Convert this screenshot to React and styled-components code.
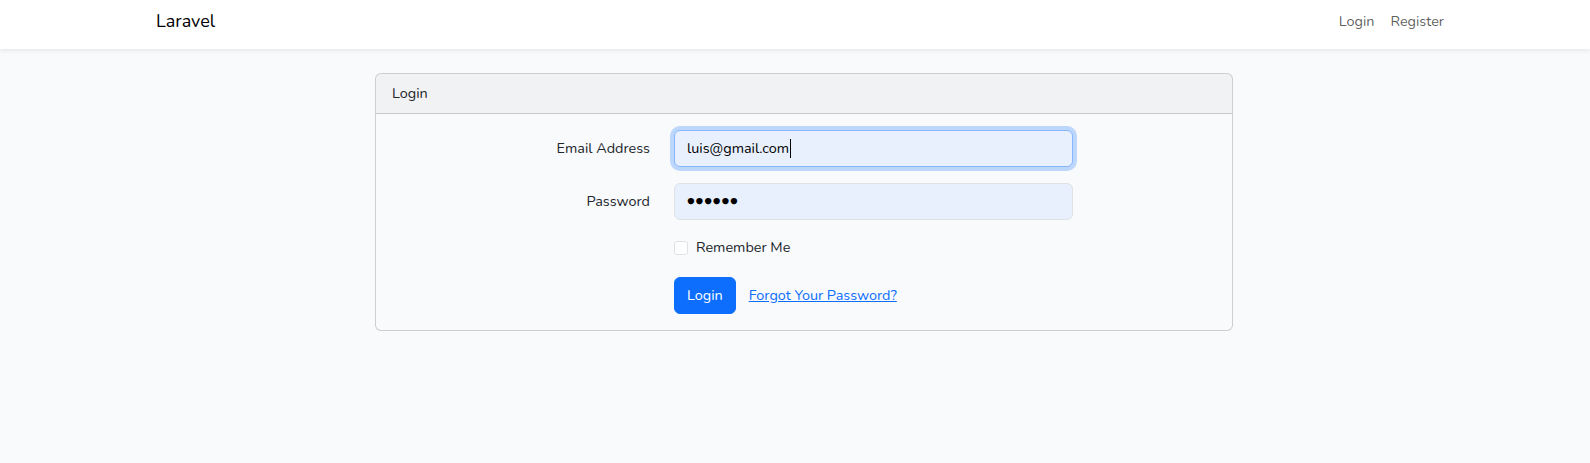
import React from 'react';
import styled, { createGlobalStyle } from 'styled-components';

const GlobalStyle = createGlobalStyle`
	body {
		margin: 0;
		background: #f8fafc;
		color: #212529;
		font-family: "Nunito", "Lato", "Noto Sans", sans-serif;
		font-size: 14.4px;
		line-height: 1.6;
	}
`;

const Navbar = styled.nav`
	background: #fff;
	box-shadow: 0 2px 4px rgba(0, 0, 0, 0.075);
	height: 49px;
`;

const Container = styled.div`
	box-sizing: border-box;
	display: flex;
	align-items: center;
	justify-content: ${props => (props.center ? 'center' : 'space-between')};
	height: 100%;
	margin: 0 auto;
	max-width: 1314px;
	padding-left: 18px;
`;

const Brand = styled.a`
	color: #000;
	font-size: 18px;
	line-height: 28px;
	margin-top: -7px;
	text-decoration: none;
`;

const NavLinks = styled.ul`
	display: flex;
	list-style: none;
	margin: -6px 0 0;
	padding: 0;
`;

const NavLink = styled.a`
	color: rgba(0, 0, 0, 0.65);
	display: block;
	padding: 0 8px;
	text-decoration: none;
`;

const Main = styled.main`
	padding: 24px 0;
`;

const Card = styled.div`
	background: #f8fafc;
	border: 1px solid rgba(0, 0, 0, 0.175);
	border-radius: 6px;
	overflow: hidden;
	width: 856px;
`;

const CardHeader = styled.div`
	background: rgba(0, 0, 0, 0.03);
	border-bottom: 1px solid rgba(0, 0, 0, 0.175);
	padding: 8px 16px;
`;

const CardBody = styled.form`
	display: flex;
	flex-direction: column;
	gap: 16px;
	padding: 16px;
`;

const FormRow = styled.div`
	display: grid;
	grid-template-columns: 258px 399px;
	column-gap: 24px;
	align-items: center;
`;

const Label = styled.label`
	grid-column: 1;
	text-align: right;
`;

const Field = styled.div`
	grid-column: 2;
	background: #e8f0fe;
	border: 1px solid ${props => (props.focused ? '#86b7fe' : '#dee2e6')};
	border-radius: 6px;
	box-shadow: ${props => (props.focused ? '0 0 0 4px rgba(13, 110, 253, 0.25)' : 'none')};
	box-sizing: border-box;
	color: #000;
	display: flex;
	align-items: center;
	height: 37px;
	padding: 0 12px;
`;

const Caret = styled.span`
	background: #000;
	display: inline-block;
	height: 19px;
	margin-left: 1px;
	width: 1px;
`;

const Dots = styled.span`
	font-size: 13px;
	letter-spacing: 0.8px;
`;

const Offset = styled.div`
	grid-column: 2;
	display: flex;
	align-items: center;
	margin-bottom: ${props => props.mb || 0}px;
`;

const Check = styled.span`
	background: #fff;
	border: 1px solid #dee2e6;
	border-radius: 3px;
	box-sizing: border-box;
	height: 14px;
	margin-right: 8px;
	width: 14px;
`;

const Button = styled.button`
	background: #0d6efd;
	border: 1px solid #0d6efd;
	border-radius: 6px;
	color: #fff;
	font: inherit;
	height: 37px;
	padding: 0 12px;
`;

const LinkButton = styled.a`
	color: #0d6efd;
	margin-left: 1px;
	padding: 6px 12px;
	text-decoration: underline;
`;

export default function App() {
	return (
		<>
			<GlobalStyle />
			<Navbar>
				<Container>
					<Brand href="#">Laravel</Brand>
					<NavLinks>
						<li><NavLink href="#">Login</NavLink></li>
						<li><NavLink href="#">Register</NavLink></li>
					</NavLinks>
				</Container>
			</Navbar>

			<Main>
				<Container center>
					<Card>
						<CardHeader>Login</CardHeader>
						<CardBody onSubmit={e => e.preventDefault()}>
							<FormRow>
								<Label>Email Address</Label>
								<Field focused>
									luis@gmail.com<Caret />
								</Field>
							</FormRow>
							<FormRow>
								<Label>Password</Label>
								<Field>
									<Dots>●●●●●●</Dots>
								</Field>
							</FormRow>
							<FormRow>
								<Offset mb={2}>
									<Check />
									Remember Me
								</Offset>
							</FormRow>
							<FormRow>
								<Offset>
									<Button type="submit">Login</Button>
									<LinkButton href="#">Forgot Your Password?</LinkButton>
								</Offset>
							</FormRow>
						</CardBody>
					</Card>
				</Container>
			</Main>
		</>
	);
}
